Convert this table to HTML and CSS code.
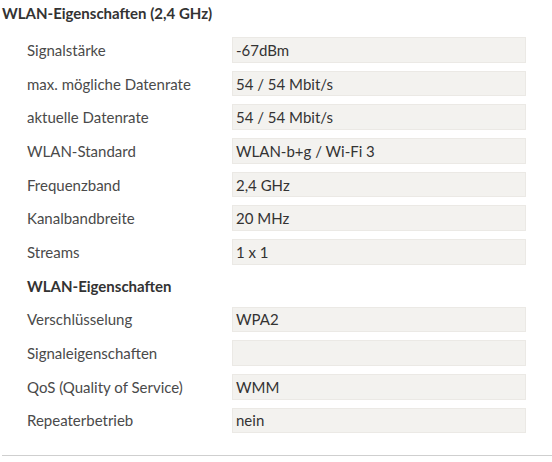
FILE: index.html
```html
<!DOCTYPE html>
<html lang="de">
<head>
<meta charset="utf-8">
<link rel="stylesheet" href="styles.css">
</head>
<body>
<div class="panel">
  <h2 class="title">WLAN-Eigenschaften (2,4 GHz)</h2>
  <div class="grid">
    <div class="label">Signalstärke</div><div class="value">-67dBm</div>
    <div class="label">max. mögliche Datenrate</div><div class="value">54 / 54 Mbit/s</div>
    <div class="label">aktuelle Datenrate</div><div class="value">54 / 54 Mbit/s</div>
    <div class="label">WLAN-Standard</div><div class="value">WLAN-b+g / Wi-Fi 3</div>
    <div class="label">Frequenzband</div><div class="value">2,4 GHz</div>
    <div class="label">Kanalbandbreite</div><div class="value">20 MHz</div>
    <div class="label">Streams</div><div class="value">1 x 1</div>
    <div class="subhead">WLAN-Eigenschaften</div>
    <div class="label">Verschlüsselung</div><div class="value">WPA2</div>
    <div class="label">Signaleigenschaften</div><div class="value"></div>
    <div class="label">QoS (Quality of Service)</div><div class="value">WMM</div>
    <div class="label">Repeaterbetrieb</div><div class="value">nein</div>
  </div>
  <hr class="rule">
</div>
</body>
</html>
```
FILE: styles.css
```css
html, body {
  margin: 0;
  padding: 0;
  background: #ffffff;
}
body {
  font-family: Lato, "Open Sans", sans-serif;
  font-size: 15px;
  color: #444;
}
.panel {
  padding: 0 0 0 2px;
}
.title {
  margin: 0;
  padding-top: 4px;
  height: 37px;
  box-sizing: border-box;
  font-size: 15px;
  font-weight: 700;
  color: #333;
  line-height: 18px;
}
.grid {
  display: grid;
  grid-template-columns: 205px 294px;
  grid-auto-rows: 25.7px;
  row-gap: 8px;
  padding-left: 25px;
}
.label {
  display: flex;
  align-items: center;
  color: #4a4a4a;
  white-space: nowrap;
}
.subhead {
  grid-column: 1 / 3;
  display: flex;
  align-items: center;
  font-weight: 700;
  color: #333;
}
.value {
  display: flex;
  align-items: center;
  padding-left: 3px;
  background: #f3f2ef;
  border: 1px solid #ebe9e5;
  box-sizing: border-box;
  color: #333;
  white-space: nowrap;
}
.rule {
  margin: 22px 0 0 0;
  border: 0;
  border-top: 1px solid #cfcfcf;
  height: 0;
}
```
